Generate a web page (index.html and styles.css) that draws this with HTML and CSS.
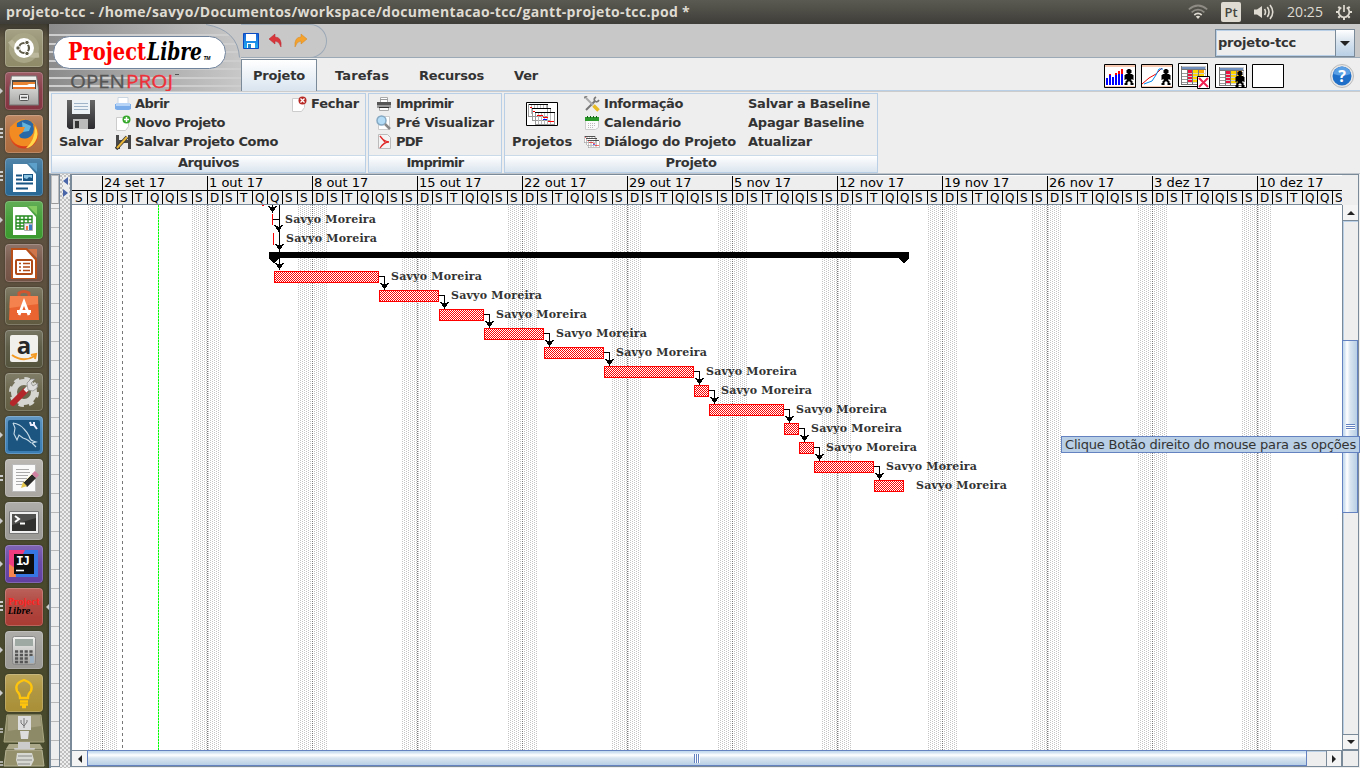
FILE: index.html
```html
<!DOCTYPE html>
<html lang="pt">
<head>
<meta charset="utf-8">
<title>projeto-tcc</title>
<link rel="stylesheet" href="styles.css">
</head>
<body>
<svg class="defs" width="0" height="0">
  <defs>
    <linearGradient id="gLogo" x1="0" x2="1" y1="0" y2="0"><stop offset="0" stop-color="#8b8b8b"/><stop offset="1" stop-color="#c8c8c8"/></linearGradient>
    <linearGradient id="gDark" x1="0" x2="0" y1="0" y2="1"><stop offset="0" stop-color="#666"/><stop offset="1" stop-color="#2c2c30"/></linearGradient>
    <linearGradient id="gSilver" x1="0" x2="0" y1="0" y2="1"><stop offset="0" stop-color="#f2f2f0"/><stop offset="1" stop-color="#a6a6a4"/></linearGradient>
    <linearGradient id="gBlue" x1="0" x2="0" y1="0" y2="1"><stop offset="0" stop-color="#1a60d8"/><stop offset="1" stop-color="#1fb0f4"/></linearGradient>
    <linearGradient id="gFox" x1="0" x2="0" y1="0" y2="1"><stop offset="0" stop-color="#f09a20"/><stop offset="1" stop-color="#d8381a"/></linearGradient>
    <symbol id="person" viewBox="0 0 10 16"><path d="M3.500 0h3v1h1v3h-1v1h2v1h1v5h-1v-1h-1v2h1v2h1v2h-3v-3h-1v-1h-1v1h-1v3h-3v-2h1v-2h1v-2h-1v1h-1v-5h1v-1h2v-1h-1v-3h1z"/></symbol>
    <symbol id="gantt" viewBox="0 0 28 22"><g shape-rendering="crispEdges"><path fill="#fff" stroke="#999" d="M.5 1.500h19v12h-19zM4.500 5.500h18v12h-18zM7.500 9.500h19v12h-19z"/><path stroke="#bbb" d="M3.500 2v9M6.500 2v4M9.500 2v4M12.500 2v4M15.500 2v4M18.500 2v4M10.500 10v11M13.500 10v11M16.500 10v11M19.500 10v11M22.500 10v11"/><path stroke="#000" d="M1 1.500h19M4 5.500h19M7 9.500h20"/><path stroke="#f00" stroke-width="1" d="M2 4.500h2M5 8.500h2M9 12.500h6M15 14.500h5M20 18.500h6"/><path stroke="#00f" d="M15 16.500h4"/></g></symbol>
    <symbol id="sheet" viewBox="0 0 25 19"><g shape-rendering="crispEdges"><path fill="#ccc" d="M0 0h25v19H0z"/><path fill="#7090c0" d="M1 1h23v2H1z"/><path fill="#fff" d="M1 4h5v14H1zM7 4h4v14H7zM12 4h5v14h-5zM18 4h6v14h-6z"/><path fill="#f01040" d="M7 4h4v13H7z"/><path fill="#ffd600" d="M12 4h5v13h-5zM18 8h5v9h-5z"/><path fill="#ffa800" d="M18 4h5v4h-5z"/><path stroke="#999" d="M1 7.500h5M1 10.500h5M1 13.500h5M1 16.500h5"/><path stroke="#ccc" d="M7 7.500h17M7 10.500h17M7 13.500h17M7 16.500h17"/><path stroke="#777" d="M.5 0v19M6.500 3v16M11.500 3v16M17.500 3v16M0 3.500h25M0 18.500h25"/></g></symbol>
  </defs>
</svg>

<header class="panel">
  <span class="panel-title" data-w="684">projeto-tcc - /home/savyo/Documentos/workspace/documentacao-tcc/gantt-projeto-tcc.pod *</span>
  <div class="indicators">
    <svg width="20" height="16" viewBox="0 0 20 16" fill="none" stroke-width="1.700"><path stroke="#8d8b84" d="M.8 5.300q9.200-7.600 18.400 0M3.600 8.300q6.400-5.400 12.800 0"/><path stroke="#dfdbd2" d="M6.300 11q3.700-3.200 7.400 0"/><path fill="#dfdbd2" d="M7.800 12.500q2.200-1.500 4.400 0L10 15z"/></svg>
    <span class="kbd">Pt</span>
    <svg width="20" height="16" viewBox="0 0 20 16" fill="none" stroke="#dfdbd2" stroke-width="1.600"><path fill="#dfdbd2" stroke="none" d="M0 5.500h3L8 2v12l-5-3.500H0z"/><path d="M10.500 5q2 3 0 6M13.300 3q3.500 5 0 10M16 1q5.500 7 0 14"/></svg>
    <span class="clock" data-w="36">20:25</span>
    <svg width="16" height="16" viewBox="0 0 16 16" fill="none" stroke="#dfdbd2"><path stroke-width="1.700" d="M5.300 3.400a5.300 5.300 0 1 0 5.400 0M8 1v7"/><path stroke-width="2" d="M3.800 4.200 2.300 2.700M2.500 8H0M3.800 12.200l-1.500 1.500M8 13.500V16M12.200 12.200l1.500 1.500M13.500 8H16M12.200 4.200l1.500-1.500"/></svg>
  </div>
</header>

<div class="desktop">
<nav class="launcher">
  <div class="tile" style="--c:#8f8b69"><svg viewBox="0 0 38 38"><circle cx="19" cy="19" r="15" fill="#a8a587"/><path d="M5 12q12 16 29 14" stroke="#bbb89e" stroke-width="5" fill="none"/><circle cx="19" cy="19" r="10" fill="#fff"/><circle cx="19" cy="19" r="5" fill="none" stroke="#5c5946" stroke-width="2.200"/><g fill="#5c5946" stroke="#fff"><circle cx="13" cy="19" r="2.200"/><circle cx="22" cy="13.500" r="2.200"/><circle cx="22" cy="24.500" r="2.200"/></g></svg></div>
  <div class="tile one" style="--c:#83333f"><svg viewBox="0 0 38 38"><path fill="url(#gSilver)" stroke="#777" d="M6.500 4h25l2 13v16h-29V17z"/><path fill="#4b4a45" d="M7 8h24v9H7z"/><path fill="#e88432" d="M8 10h22v7H8z"/><path fill="#fff" d="M8 13h14l2-1h6v5H8z"/><path fill="#e8742c" d="M8 15h22v2H8z"/><rect x="14.500" y="22.500" width="9" height="6" rx="1" fill="#eee" stroke="#555"/><path stroke="#555" stroke-width="1.500" d="M16 25.500h6"/></svg></div>
  <div class="tile many" style="--c:#ad6b3d"><svg viewBox="0 0 38 38"><circle cx="19" cy="19" r="14.500" fill="url(#gFox)"/><path fill="#2969a8" d="M12 8q12-8 18 4 4 12-7 17-10 0-12-8z"/><path fill="#64b5dc" d="M17 7l9 4-2 5-6 1z"/><path fill="#f28b22" d="M5 12l5-4 2 4 8 0-2 5-4 3q1 5 9 3 8-4 5-14 8 8 2 17-7 8-17 4Q3 25 5 12z"/><path fill="#ffd64a" d="M30 11q5 8 0 16-4 6-9 6 9-7 9-22z"/></svg></div>
  <div class="tile many" style="--c:#286894"><svg viewBox="0 0 38 38"><path fill="#fff" d="M8 6h14l9 10v18H8z"/><path fill="#5da0c9" d="M23 5h9v9z"/><path stroke="#185484" stroke-width="2" d="M11 17.500h6M11 21.500h6M11 25.500h17M11 30.500h12"/><path fill="#185484" d="M18 16h10v7H18z"/><path fill="#8ac2e2" d="M19 17h8v3l-3-1-2 2-3-1z"/></svg></div>
  <div class="tile one" style="--c:#3b992e"><svg viewBox="0 0 38 38"><path fill="#fff" d="M8 6h14l9 10v18H8z"/><path fill="#84cb62" d="M23 5h9v9z"/><path stroke="#258b20" stroke-width="1.400" fill="none" d="M11 15h16v13H11zM11 18.500h16M11 22h16M11 25h16M15 15v13M19 15v13M23 15v13"/><path fill="#eee" stroke="#aaa" d="M19.500 22.500h8v7h-8z"/><path fill="#f07840" d="M21 25h2v4h-2z"/><path fill="#3c78c0" d="M24 23.500h3V29h-3z"/></svg></div>
  <div class="tile" style="--c:#725244"><svg viewBox="0 0 38 38"><path fill="#b84e18" d="M6 4h16l10 11v20H6z"/><path fill="#fff" d="M8 6h13l9 10v18H8z"/><path fill="#cf7549" d="M23 5h9v9z"/><rect x="11" y="16" width="16" height="14" rx="1" fill="#fff" stroke="#b04a16" stroke-width="2"/><path stroke="#b04a16" stroke-width="1.700" d="M14 19.500h2M18 19.500h7M14 23h2M18 23h7M14 26.500h2M18 26.500h7"/></svg></div>
  <div class="tile" style="--c:#605b40"><svg viewBox="0 0 38 38"><path fill="none" stroke="#cf5630" stroke-width="3" d="M14 10V6q5-3 10 0v4"/><path fill="#ea6431" d="M5 9h28l1 24H4z"/><path fill="#f4824e" d="M5 9h28v8L4.500 21z"/><path fill="none" stroke="#fff" stroke-width="2.800" d="m14 28 5-13 5 13M12 24.500h14"/></svg></div>
  <div class="tile" style="--c:#54533c"><svg viewBox="0 0 38 38"><rect x="5" y="5" width="28" height="27" rx="2" fill="#f2f0ed"/><text x="19" y="24" text-anchor="middle" font-family="Open Sans" font-size="24" font-weight="bold" fill="#282828">a</text><path stroke="#f59a22" stroke-width="2" fill="none" d="M7 25q11 8 23 1M26 25l5-1-1 5"/></svg></div>
  <div class="tile" style="--c:#625e43"><svg viewBox="0 0 38 38"><circle cx="19" cy="19" r="10" fill="none" stroke="#d5d5d1" stroke-width="6"/><circle cx="19" cy="19" r="13" fill="none" stroke="#d5d5d1" stroke-width="4" stroke-dasharray="5.200 5"/><path stroke="#b3272b" stroke-width="6" stroke-linecap="round" d="m8 30 12-12"/><path stroke="#e9e9e9" stroke-width="4" d="m20 18 5-5"/><path fill="#ddd" stroke="#888" stroke-width=".7" d="m22 10 4-4h4l-4 4 2 3 5-3-1 5-4 3-5-1z"/></svg></div>
  <div class="tile one" style="--c:#3a7db3"><svg viewBox="0 0 38 38"><rect x="3" y="4" width="32" height="31" rx="2" fill="#1c5580"/><path fill="none" stroke="#c8dce8" stroke-width="1.100" d="M8 7q7 1 11 6 3 3 5 7 1 4 4 5l3 1-4 1 4 4M8 7l2 5-1 6 3 6 2-5 4 3q6 2 8 5"/><path stroke="#eef" stroke-width="2" fill="none" d="m25 6 1 3h3l3 4M29 6v3"/></svg></div>
  <div class="tile two" style="--c:#aaa6a1"><svg viewBox="0 0 38 38"><path fill="#fafafa" stroke="#bbb" d="M7.500 5.500h23v27h-23z"/><path stroke="#aaa" d="M11 10.500h13M11 13.500h14M11 16.500h12M11 19.500h14M11 22.500h12M11 25.500h6"/><path stroke="#2a2a28" stroke-width="6" d="M29 17 20 26"/><path stroke="#d080a0" stroke-width="6" d="m29 17 3-3"/><path stroke="#ede6b4" stroke-width="1" d="m19 23 8-8"/><path fill="#e5c84b" d="m18 23 4 4-6 2z"/></svg></div>
  <div class="tile one" style="--c:#9c9a96"><svg viewBox="0 0 38 38"><path fill="#eee" stroke="#777" d="M4.500 9.500h29v22h-29z"/><path fill="#30302e" d="M7 12h24v17H7z"/><path fill="#50504e" d="M7 12h24v4L7 23z"/><path fill="none" stroke="#fff" stroke-width="2" d="m10 14 4 3-4 3M15 21.500h5"/></svg></div>
  <div class="tile one" style="--c:#613fa1"><svg viewBox="0 0 38 38"><path fill="#3676e4" d="M4 5h29v27H4z"/><path fill="#ed3c80" d="M4 5h16l-9 18-7 3z"/><path fill="#f68550" d="m4 19 6 4 1 9H4z"/><path fill="#0d0d0d" d="M9 9h20v20H9z"/><text x="11" y="20" font-family="Liberation Mono" font-weight="bold" font-size="13" fill="#fff" textLength="14">IJ</text><path stroke="#fff" stroke-width="1.600" d="M11 25.500h8"/></svg></div>
  <div class="tile many active" style="--c:#aa3b33"><svg viewBox="0 0 38 38"><g font-family="DejaVu Serif" font-weight="bold"><text x="3" y="17" font-size="9" fill="#f22" textLength="32" lengthAdjust="spacingAndGlyphs">Project</text><text x="3" y="26" font-size="9" font-style="italic" textLength="25" lengthAdjust="spacingAndGlyphs">Libre.</text></g></svg></div>
  <div class="tile one" style="--c:#9b9a96"><svg viewBox="0 0 38 38"><rect x="7.500" y="5.500" width="23" height="28" rx="2" fill="url(#gSilver)" stroke="#888"/><path fill="#9fa9a4" d="M10 8h18v7H10z"/><path stroke="#555" stroke-width="2.400" stroke-dasharray="3.200 1.600" d="M10 20.500h18M10 24h18M10 27.500h14M10 31h14"/><path fill="#9eb2c4" d="M25 25h4v7h-4z"/></svg></div>
  <div class="tile one" style="--c:#a98f36"><svg viewBox="0 0 38 38" fill="none" stroke="#ffc50c" stroke-width="2.300"><path d="M15 24q0-4-3-7-3-8 7-11 10 3 7 11-3 3-3 7z"/><path d="M15 27.500h8M15 30.500h8M17 33h4"/></svg></div>
  <svg class="folded" width="49" height="54" viewBox="0 0 49 54"><path fill="#8d8a68" stroke="#aaa783" d="M7 1h34l3 27H4z"/><path fill="#a29e7d" d="M8 2h32l1 10-33 5z"/><path fill="#ddd" d="M18 2h13v14H18zM20 17h9l-1 8h-7z"/><path stroke="#777" fill="none" d="M24 4v10M21 6v3l3 3 3-4V6"/><path fill="#aaa688" d="M9 30h31l3 5H6z"/><path fill="#ccc" d="M18 28h12v6h5l-1 4H15l-1-4h4z"/><path fill="#94906c" stroke="#b5b293" d="M6 36h36l2 16H4z"/><path fill="#d8d8d2" d="M17 39h15l2 7-3 6H18l-2-6z"/><path stroke="#888" d="M18 42h14M17 46h15M18 50h12"/><path stroke="#ccc" stroke-width="1.500" d="M0 15h3M0 18h3M0 48h3M0 51h3"/></svg>
</nav>

<main class="app">
  <section class="head">
    <svg class="brand" width="192" height="67" viewBox="49 24 192 67">
      <path fill="url(#gLogo)" d="M49 24h192v67H49z"/>
      <path fill="#cecece" d="M49 34h180v2H49zM49 43h190v2H49zM49 51h192v2H49zM49 60h192v2H49zM49 68h192v2H49zM49 77h192v2H49zM49 85h192v2H49z"/>
      <path fill="#c8c8c8" d="M206 24h35v34h-2Q238 30 206 24z"/>
      <path fill="none" stroke="#93a0b0" d="M206 24.500Q238 30 239.500 57.500"/>
      <rect x="53.500" y="36.500" width="172" height="32" rx="16" fill="#fff" stroke="#70839c"/>
      <g font-family="DejaVu Serif Condensed, DejaVu Serif" font-weight="bold" font-size="24"><text x="68" y="60" fill="#f00" textLength="78" lengthAdjust="spacingAndGlyphs">Project</text><text x="147" y="60" font-style="italic" textLength="55" lengthAdjust="spacingAndGlyphs">Libre</text></g>
      <text x="203.500" y="60" font-family="Liberation Sans" font-style="italic" font-weight="bold" font-size="5" textLength="7">TM</text>
      <g font-family="Open Sans" font-size="18.500" stroke-width=".3"><text x="70" y="88" fill="#555" stroke="#555" textLength="55" lengthAdjust="spacingAndGlyphs">OPEN</text><text x="126" y="88" fill="#ee3039" stroke="#ee3039" textLength="47" lengthAdjust="spacingAndGlyphs">PROJ</text></g>
      <path fill="#555" d="M175 74h4v1h-4z"/>
    </svg>
    <div class="head-right">
      <div class="quickbar">
        <div class="quick">
          <svg width="16" height="16"><path fill="url(#gBlue)" stroke="#0c4cc0" d="M.5.500h15v15H.5z"/><path fill="#fff" d="M3 1h10v7H3zM4 10h8v5H4z"/><path fill="#28c" d="M5 11h3v4H5z"/></svg>
          <svg width="16" height="16"><path fill="#d9363c" stroke="#b62228" stroke-width=".5" d="M1 6l6-5v3q7 0 6 10-2-6-6-6v3z"/></svg>
          <svg width="16" height="16"><path fill="#f5a22c" stroke="#d4851c" stroke-width=".5" d="M14 6 8 1v3Q1 4 2 14q2-6 6-6v3z"/></svg>
        </div>
        <div class="combo"><span class="combo-text"><b data-w="78">projeto-tcc</b></span><span class="combo-btn"><svg width="10" height="5"><path d="M0 0h10L5 5z" fill="#222"/></svg></span></div>
      </div>
      <div class="tabs">
        <a class="tab on"><b data-w="52">Projeto</b></a><a class="tab"><b data-w="54">Tarefas</b></a><a class="tab"><b data-w="65">Recursos</b></a><a class="tab"><b data-w="24">Ver</b></a>
        <div class="views">
          <svg width="32" height="24"><path class="vbox" d="M.5.500h31v23H.5z"/><path fill="#f7c9b0" d="M1 1h30v2H1zM1 22h30v1H1z"/><g shape-rendering="crispEdges"><path fill="#00f" d="M2 14h2v7H2zM5 11h2v10H5zM8 13h2v8H8zM11 11h2v10h-2zM14 10h2v11h-2zM17 10h2v11h-2z"/><path fill="#f00" d="M5 10h2v1H5zM11 9h2v2h-2zM14 7h2v3h-2zM17 5h2v5h-2z"/></g><use href="#person" x="20" y="5" width="10" height="16"/></svg>
          <svg width="32" height="24"><path class="vbox" d="M.5.500h31v23H.5z"/><path fill="#f7c9b0" d="M1 1h30v2H1zM1 22h30v1H1z"/><path fill="none" stroke="#e00" d="m1 20 7-6 7-4 6-6"/><path fill="none" stroke="#08e" d="m3 20 8-3 4-6 3-6h4"/><use href="#person" x="20" y="5" width="10" height="16"/></svg>
          <svg class="up" width="32" height="26"><path class="vbox" d="M.5.500h29v23H.5z"/><use href="#sheet" x="3" y="3" width="25" height="19"/><path class="vbox" d="M19.500 13.500h12v12h-12z"/><path stroke="#f02050" stroke-width="2" d="m21 15 9 9m0-9-9 9"/></svg>
          <svg width="32" height="24"><path class="vbox" d="M.5.500h31v23H.5z"/><use href="#sheet" x="4" y="3" width="25" height="19"/><use href="#person" x="20" y="7" width="10" height="16"/></svg>
          <svg width="32" height="24"><path class="vbox" d="M.5.500h31v23H.5z"/></svg>
        </div>
        <svg class="help" width="24" height="24"><circle cx="12" cy="12" r="11.500" fill="#e6e6e6" stroke="#bbb"/><circle cx="12" cy="12" r="9.500" fill="#1f6fc8"/><path fill="#5a9ee4" d="M3.500 10q1-7 8.500-7.500 7.500.5 8.500 7.500-8 3-17 0z"/><text x="12" y="18" text-anchor="middle" font-family="Open Sans" font-weight="bold" font-size="16" fill="#fff">?</text></svg>
      </div>
    </div>
  </section>

  <section class="ribbon">
    <div class="group g1">
      <div class="cmds">
        <div class="big"><svg width="30" height="31" viewBox="0 0 30 31"><path fill="url(#gDark)" d="M1 1h28v28l-1 1H3l-2-2z"/><path fill="#edf2f6" d="M6 1h18v14H6z"/><path stroke="#9fb4c8" d="M8 4.500h14M8 7.500h14M8 10.500h14"/><path fill="#bbb" d="M7 20h15v10H7z"/><path fill="#333" d="M9 22h4v7H9z"/></svg><b data-w="44">Salvar</b></div>
        <div class="col c1">
          <div class="cmd"><svg width="16" height="16"><path fill="#fff" stroke="#cbd6e3" d="M3 1.500h10v6H3z"/><path fill="#7badea" d="M0 8h16v5l-2 1H2l-2-1z"/><path fill="#b7d4f6" d="M1 7h14v3H1z"/></svg><b data-w="34">Abrir</b></div>
          <div class="cmd"><svg width="16" height="16"><path fill="#fff" stroke="#ccc" d="M1.500 2.500h12v9l-3 4h-9z"/><circle cx="11.500" cy="4.500" r="4" fill="#36a82c"/><path stroke="#fff" stroke-width="1.500" d="M9 4.500h5M11.500 2v5"/></svg><b data-w="90">Novo Projeto</b></div>
          <div class="cmd"><svg width="16" height="16"><path fill="#484848" d="M1 1h15v14H1z"/><path fill="#e9e9e9" d="M4 1h9v5H4zM5 9h8v6H5z"/><path stroke="#333" stroke-width="3.500" d="M1 15 12 3"/><path stroke="#e8b63a" stroke-width="2" d="M2 14 12 3"/></svg><b data-w="143">Salvar Projeto Como</b></div>
        </div>
        <div class="col"><div class="cmd"><svg width="16" height="16"><path fill="#fff" stroke="#ccc" d="M1.500 2.500h12v9l-3 4h-9z"/><circle cx="11.500" cy="4.500" r="4" fill="#b72824"/><path stroke="#fff" stroke-width="1.300" d="m9.500 2.500 4 4m0-4-4 4"/></svg><b data-w="48">Fechar</b></div></div>
      </div>
      <div class="gtitle"><b data-w="61">Arquivos</b></div>
    </div>
    <div class="group g2">
      <div class="cmds">
        <div class="col">
          <div class="cmd"><svg width="16" height="16"><path fill="#fff" stroke="#aaa" d="M4.500 1.500h7v5h-7zM3.500 10.500h9v4h-9z"/><path fill="#555" d="M1 6h14v3H1z"/><path fill="#999" d="M1 9h14v3H1zM4 3h8v1H4z"/><path fill="#333" d="M3 11h10v1H3z"/></svg><b data-w="57">Imprimir</b></div>
          <div class="cmd"><svg width="16" height="16"><path fill="#fff" stroke="#ccc" d="M2.500 1.500h11v13h-11z"/><circle cx="5.500" cy="5.500" r="4.500" fill="#b4dcf6" stroke="#86a9c3" stroke-width="1.500"/><path stroke="#888" stroke-width="2.500" d="m9 9 5 5"/></svg><b data-w="98">Pré Visualizar</b></div>
          <div class="cmd"><svg width="16" height="16"><path fill="#f4f4f4" stroke="#bbb" d="M2.500.500h9l3 3v11h-12z"/><path fill="none" stroke="#e02828" stroke-width="1.300" d="M4 2q3 5 9 6-5 0-9 6M4 2l5 6"/></svg><b data-w="27">PDF</b></div>
        </div>
      </div>
      <div class="gtitle"><b data-w="57">Imprimir</b></div>
    </div>
    <div class="group g3">
      <div class="cmds">
        <div class="big"><svg width="32" height="30"><path fill="#fff" stroke="#000" d="M.5 2.500h31v23H.5z"/><use href="#gantt" x="2" y="3" width="28" height="22"/></svg><b data-w="60">Projetos</b></div>
        <div class="col c3">
          <div class="cmd"><svg width="16" height="16"><path stroke="#777" stroke-width="2" d="m2 14 9-9"/><path stroke="#aaa" stroke-width="2" d="m2 2 7 7"/><path stroke="#e8bb25" stroke-width="3.500" d="m9.500 9.500 5 5"/><path fill="none" stroke="#777" stroke-width="1.700" d="M12 1q-3 2-1 4t4-1"/><path stroke="#888" stroke-width="2" d="m0 2 3-2"/></svg><b data-w="79">Informação</b></div>
          <div class="cmd"><svg width="16" height="16"><path fill="#fafafa" stroke="#ccc" d="M1.500 4.500h13v8l-3 2h-10z"/><path fill="#2a9a2a" d="M1 2h14v4H1z"/><path stroke="#185f18" d="M3.500 1v2M6.500 1v2M9.500 1v2M12.500 1v2"/><path stroke="#bbb" stroke-dasharray="1 1" d="M4 8.500h8M4 10.500h8M4 12.500h6"/></svg><b data-w="77">Calendário</b></div>
          <div class="cmd"><svg width="16" height="16"><use href="#gantt" x="0" y="1" width="16" height="13"/></svg><b data-w="132">Diálogo do Projeto</b></div>
        </div>
        <div class="col c4"><div class="cmd"><b data-w="122">Salvar a Baseline</b></div><div class="cmd"><b data-w="116">Apagar Baseline</b></div><div class="cmd"><b data-w="64">Atualizar</b></div></div>
      </div>
      <div class="gtitle"><b data-w="51">Projeto</b></div>
    </div>
  </section>

  <section class="work">
    <div class="table-strip"><div class="strip-head"></div><div class="strip-rows"></div></div>
    <div class="splitter"><svg width="6" height="20" fill="#4a66a8"><path d="M5 0v8L0 4zM0 12v8l5-4z"/></svg></div>
    <div class="gantt">
      <div class="timeline"><div class="weeks" id="weeks"></div><div class="days" id="days"></div></div>
      <div class="corner"></div>
      <svg class="chart" id="chart" width="1270" height="545" viewBox="72 205 1270 545" shape-rendering="crispEdges"></svg>
      <div class="vbar"><span class="sbtn"><svg width="8" height="4"><path d="M4 0l4 4H0z" fill="#222"/></svg></span><span class="vtrack"><i class="vthumb"><em></em></i></span><span class="sbtn dn"><svg width="8" height="4"><path d="M0 0h8L4 4z" fill="#222"/></svg></span></div>
      <div class="hbar"><span class="hbtn"><svg width="4" height="8"><path d="M4 0v8L0 4z" fill="#222"/></svg></span><span class="htrack"><i class="hthumb"><em></em></i></span><span class="hbtn rt"><svg width="4" height="8"><path d="M0 0l4 4-4 4z" fill="#222"/></svg></span></div>
      <div class="corner low"></div>
    </div>
  </section>
</main>
</div>
<div class="tooltip"><span data-w="291">Clique Botão direito do mouse para as opções</span></div>
<script src="app.js"></script>
</body>
</html>
```
FILE: styles.css
```css
* { box-sizing: border-box; }
body { margin: 0; width: 1360px; height: 768px; overflow: hidden; display: flex; flex-direction: column; background: #eee; font: 13px "DejaVu Sans", sans-serif; color: #333; }
b, [data-w] { white-space: nowrap; }
svg { display: block; flex: none; }
.defs { position: absolute; }
.panel { height: 24px; flex: none; display: flex; align-items: center; justify-content: space-between; padding: 0 8px 0 6px; background: linear-gradient(#5b5a52, #3e3d38); color: #dfdbd2; }
.panel-title { font: bold 14px "Open Sans", sans-serif; position: relative; top: -1px; }
.indicators { display: flex; align-items: center; gap: 13px; }
.kbd { width: 20px; height: 20px; border-radius: 2px; background: #dfdbd2; color: #45443e; font: 600 13px/20px "Open Sans", sans-serif; text-align: center; }
.clock { font: 14px/20px "Open Sans", sans-serif; padding-bottom: 1px; }
.desktop { flex: 1; display: flex; min-height: 0; }

.launcher { width: 49px; flex: none; padding: 5px 0 0; display: flex; flex-direction: column; align-items: center; gap: 5px; background: linear-gradient(90deg, #0000 94%, #0004), linear-gradient(#3d3a30, #5d5441 14px, #5e503f 240px, #545039 400px, #49492d 530px, #484a2d); overflow: hidden; }
.tile { position: relative; flex: none; width: 38px; height: 38px; margin-right: 1px; border-radius: 4px; background: linear-gradient(#fff3, #fff1 45%, #fff0), var(--c); box-shadow: inset 0 0 0 1px #fff3, 0 0 2px #0006; }
.tile svg { width: 38px; height: 38px; overflow: visible; }
.one::before { content: ""; position: absolute; left: -5px; top: 16px; border: 3px solid transparent; border-left-color: #ccc; border-right: 0; }
.two::before, .many::before { content: ""; position: absolute; left: -5px; top: 13px; width: 3px; height: 10px; background: repeating-linear-gradient(#ccc 0 2px, transparent 2px 4px); }
.two::before { top: 16px; height: 6px; }
.active::after { content: ""; position: absolute; right: -6px; top: 16px; border: 3px solid transparent; border-right-color: #ccc; border-left: 0; }
.folded { margin-top: -3px; }

.app { flex: 1; min-width: 0; display: flex; flex-direction: column; }
.head { display: flex; height: 67px; flex: none; }
.head-right { flex: 1; display: flex; flex-direction: column; }
.quickbar { height: 34px; display: flex; justify-content: space-between; background: #c8c8c8; border-bottom: 1px solid #9ba8b6; }
.quick { width: 86px; height: 34px; display: flex; gap: 9px; align-items: center; padding: 0 0 1px 2px; border: 1px solid #9ba8b6; border-left: 0; border-radius: 0 17px 17px 0; }
.combo { width: 140px; height: 28px; margin: 5px 5px 0 0; display: flex; border: 1px solid #7a8a99; background: #eee; box-shadow: inset 0 0 0 1px #b8cfe5; }
.combo-text { flex: 1; padding: 5px 2px; line-height: 16px; }
.combo-btn { width: 19px; border-left: 1px solid #7a8a99; background: linear-gradient(#fff, #dce6f0 40%, #b8cfe5); display: grid; place-items: center; }
.tabs { height: 33px; display: flex; padding: 1px 6px 1px 0; border-bottom: 1px solid #b8cfe5; }
.tab { padding: 8px 12px 0 18px; line-height: 17px; }
.tab.on { padding: 7px 11px 0 11px; height: 32px; border: 1px solid #7a8a99; border-bottom: 0; background: linear-gradient(#fff, #d9e4ef); }
.views { margin-left: auto; display: flex; gap: 5px; padding-top: 5px; }
.views .up { margin-top: -1px; }
.vbox { fill: #fff; stroke: #000; }
.help { margin: 5px 0 0 46px; }

.ribbon { height: 82px; flex: none; display: flex; gap: 2px; padding: 1px 0 1px 2px; border-top: 1px solid #ccc; }
.group { display: flex; flex-direction: column; border: 1px solid #b8cfe5; height: 80px; }
.g1 { width: 315px; } .g2 { width: 134px; } .g3 { width: 374px; }
.cmds { height: 61px; flex: none; display: flex; }
.gtitle { flex: 1; text-align: center; line-height: 14px; border-top: 1px solid #cbdae8; background: linear-gradient(#fff, #dae4ee); }
.col { display: flex; flex-direction: column; }
.cmd { height: 19px; display: flex; align-items: center; gap: 4px; }
.big { display: flex; flex-direction: column; align-items: center; line-height: 16px; gap: 4px; padding: 5px 0 0 7px; }
.g3 .big { padding-top: 6px; }
.c1 { margin-left: 12px; width: 176px; }
.g2 .col { padding-left: 7px; }
.c3 { margin-left: 12px; width: 164px; }

.work { flex: 1; min-height: 0; display: flex; border-left: 2px solid #7a8a99; border-top: 1px solid #c0c6cc; }
.table-strip { width: 9px; margin-bottom: 1px; display: flex; flex-direction: column; border-top: 1px solid #7a8a99; border-right: 1px solid #7a8a99; border-bottom: 1px solid #7a8a99; background: #eee; }
.strip-head { height: 29px; border: 1px solid #bbb; border-bottom-color: #999; }
.strip-rows { flex: 1; background: repeating-linear-gradient(#eee 0 18px, #b8b8b8 18px 19px) 0 -14px / 100% 1900px; }
.splitter { width: 10px; padding: 3px 0 0 3px; background-color: #eee; background-image: radial-gradient(#888 .6px, transparent .8px), radial-gradient(#888 .6px, transparent .8px); background-size: 4px 4px; background-position: 3px 0, 5px 2px; }
.splitter svg { background: #eee; }
.gantt { flex: 1; margin: 0 1px 1px 0; display: grid; grid-template: 30px 545px 16px / 1270px 16px; border: solid #7a8a99; border-width: 1px 1px 1px 2px; }
.timeline { overflow: hidden; border-bottom: 1px solid #7a8a99; border-top: 1px solid #fff; background: #eee; color: #000; }
.weeks { height: 14px; display: flex; }
.week { flex: none; width: 105px; height: 14px; border-left: 1px solid #000; padding-left: 1px; line-height: 13px; }
.week.first { width: 30px; border: 0; }
.days { display: flex; border-top: 1px solid #000; height: 15px; }
.day { flex: none; width: 15px; border-left: 1px solid #000; font-size: 12px; line-height: 14px; padding-left: 2px; }
.day:first-child { border-color: #eee; }
.corner { background: #eee; }
.chart { background: #fff; }
.vbar { display: flex; flex-direction: column; border-left: 1px solid #7a8a99; }
.sbtn { height: 16px; display: grid; place-items: center; border: solid #7a8a99; border-width: 0 0 1px; background: #f4f4f4; }
.sbtn.dn { border-width: 1px 0; }
.vtrack { flex: 1; padding-top: 119px; box-shadow: inset 1px 1px #b8cfe5; }
.vthumb { display: grid; place-items: center; height: 173px; margin-left: -1px; border: 1px solid #6382bf; background: linear-gradient(90deg, #c8dcf0 0 1px, #fff 4px, #dae6f1 50%, #b8cfe5); }
.vthumb em { width: 9px; height: 6px; background: repeating-linear-gradient(#6382bf 0 1px, #fff 1px 2px); }
.hbar { display: flex; border-top: 1px solid #7a8a99; }
.hbtn { width: 16px; display: grid; place-items: center; border-right: 1px solid #7a8a99; background: #f4f4f4; }
.hbtn.rt { border-left: 1px solid #7a8a99; }
.htrack { flex: 1; box-shadow: inset 1px 1px #b8cfe5; }
.hthumb { display: grid; place-items: center; width: 1220px; height: 16px; margin: -1px 0 0 -1px; border: 1px solid #6382bf; background: linear-gradient(#c8dcf0 0 1px, #fff 4px, #dae6f1 50%, #b8cfe5); }
.hthumb em { width: 6px; height: 9px; background: repeating-linear-gradient(90deg, #6382bf 0 1px, #fff 1px 2px); }
.low { border: solid #7a8a99; border-width: 1px 0 0 1px; }
.label { font: bold 11px "DejaVu Serif", serif; fill: #333; }
.tooltip { position: absolute; left: 1061px; top: 436px; width: 299px; height: 17px; padding-left: 3px; line-height: 15px; background: #b8cfe5; border: 1px solid #6382bf; }
```
FILE: app.js
```js
const weeks = ["24 set 17", "1 out 17", "8 out 17", "15 out 17", "22 out 17", "29 out 17", "5 nov 17", "12 nov 17", "19 nov 17", "26 nov 17", "3 dez 17", "10 dez 17"];
document.getElementById("weeks").innerHTML = '<span class="week first"></span>' + weeks.map(w => `<span class="week">${w}</span>`).join("");
const letters = "SSDSTQQ";
document.getElementById("days").innerHTML = Array.from({ length: 85 }, (_, i) => `<span class="day">${letters[i % 7]}</span>`).join("");

const chart = document.getElementById("chart");
let out = "";

// Weekend shading: dots on even columns, staggered every other column
weeks.forEach((w, i) => {
  const x = 102 + i * 105;
  const start = x - 14 - (x % 2);
  let even = "", odd = "";
  for (let c = 0; c < 15; c++) {
    const seg = `M${start + c * 2 + .5} ${205 + c % 2}V750`;
    if (c % 2) odd += seg; else even += seg;
  }
  out += `<path d="${even}${odd}" stroke="#c4c4c4" stroke-dasharray="1 1"/>`;
  out += `<path d="M${x + .5} 205V750" stroke="#fff"/><path d="M${x + .5} 205V750" stroke="#777" stroke-dasharray="1 1"/>`;
});
out += '<path d="M122.500 205V750" stroke="#777" stroke-dasharray="3 3"/>';
out += '<path d="M158.500 205V750" stroke="#9f9"/><path d="M158.500 205V750" stroke="#0f0" stroke-dasharray="2 1"/>';

const head = (x, y) => `<path d="M${x} ${y}l-5-8 5 3 5-3z"/>`;
const label = (x, y) => `<text class="label" x="${x}" y="${y}" textLength="91">Savyo Moreira</text>`;

// Tasks scrolled partly out of view, and the summary bar
out += '<path d="M262 205h2v1h-2zM272 214h1v11h-1zM273 233h1v12h-1z" fill="#f00"/>';
out += '<path d="M272.500 205v5M273 219.500h6M279.500 205v62" fill="none" stroke="#000"/>';
out += head(272.5, 213) + head(278.5, 232) + head(279.5, 251) + head(279.5, 270);
out += label(285, 223) + label(286, 242);
out += '<path d="M269 252h640v7l-5 4-5-4v-1H279v1l-5 4-5-4z"/>';

const edges = [274, 379, 439, 484, 544, 604, 694, 709, 784, 799, 814, 874, 904];
for (let i = 0; i < 12; i++) {
  const a = edges[i], b = edges[i + 1], y = 271 + i * 19;
  let hatch = "";
  for (let r = 1; r < 11; r++) hatch += `M${a + 1 + r % 2} ${y + r + .5}H${b - 1}`;
  out += `<rect x="${a + .5}" y="${y + .5}" width="${b - a - 1}" height="11" fill="#fff" stroke="#f00"/>`;
  out += `<path d="${hatch}" stroke="#f00" stroke-dasharray="1 1"/>`;
  out += label(b + 12, y + 9);
  if (i < 11) out += `<path d="M${b} ${y + 5.5}h5.500v9" fill="none" stroke="#000"/>` + head(b + 5.5, y + 19);
}
chart.insertAdjacentHTML("beforeend", out);

// Spread each label over its nominal width
document.querySelectorAll("[data-w]").forEach(el => {
  el.style.display = "inline-block";
  const extra = (el.dataset.w - el.getBoundingClientRect().width) / el.textContent.length;
  el.style.letterSpacing = extra.toFixed(3) + "px";
});
```
